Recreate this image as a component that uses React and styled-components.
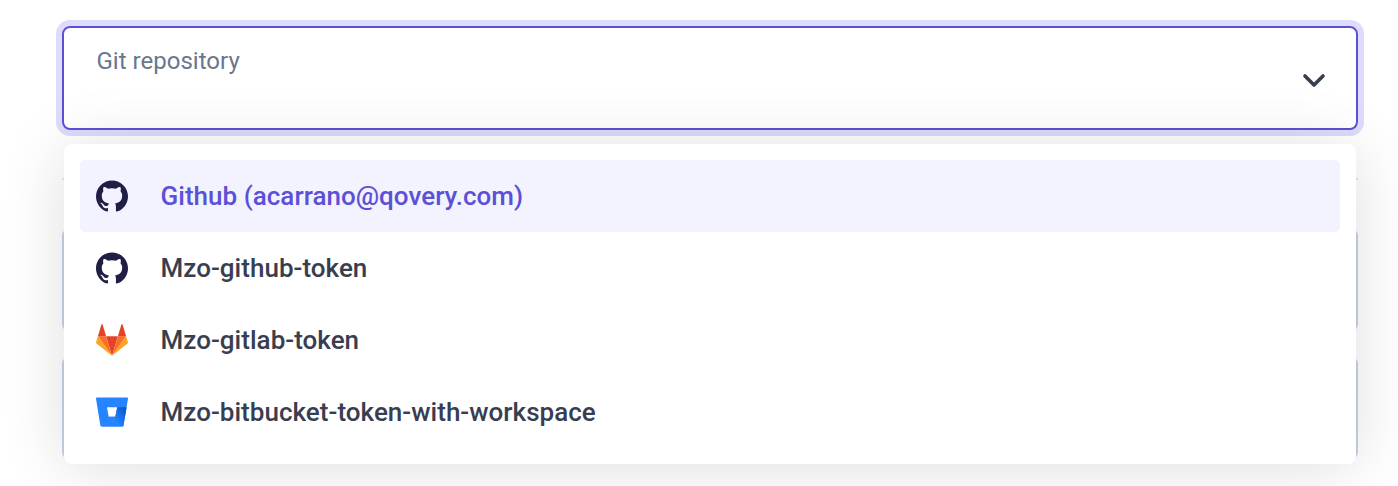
import React from "react";
import styled, { createGlobalStyle } from "styled-components";
import { SiGithub } from "react-icons/si";

const GlobalStyle = createGlobalStyle`
  * { box-sizing: border-box; }
  body {
    margin: 0;
    background: #fff;
    font-family: Roboto, "Liberation Sans", sans-serif;
    overflow: hidden;
  }
`;

const Page = styled.main`
  height: 486px;
  padding: 26px 40px 0 62px;
  overflow: hidden;
`;

const Form = styled.div`
  position: relative;
  display: flex;
  flex-direction: column;
`;

const Select = styled.div`
  display: flex;
  align-items: center;
  justify-content: space-between;
  height: 104px;
  padding: 0 30px 0 32.5px;
  border: 2px solid #5b50d6;
  border-radius: 8px;
  box-shadow: 0 0 0 6px #dedcfc;
`;

const Label = styled.span`
  align-self: flex-start;
  margin-top: 19px;
  font-size: 24px;
  line-height: 28px;
  letter-spacing: 0.02px;
  color: #67778e;
`;

const Chevron = styled.svg`
  display: block;
  width: 24px;
  height: 16px;
  margin-top: 4px;
`;

const Divider = styled.hr`
  width: 100%;
  height: 2px;
  margin: 48px 0;
  border: 0;
  background: #e1e8f5;
`;

const Field = styled.div`
  height: 104px;
  margin-bottom: 24px;
  border: 2px solid #c6d3e7;
  border-radius: 8px;
`;

const Menu = styled.ul`
  position: absolute;
  top: 118px;
  left: 2px;
  right: 2px;
  height: 320px;
  margin: 0;
  padding: 16px;
  list-style: none;
  background: #fff;
  border-radius: 8px;
  box-shadow: 0 4px 64px rgba(0, 0, 0, 0.135);
`;

const Option = styled.li`
  display: flex;
  align-items: center;
  gap: 32.5px;
  height: 72px;
  padding: 0 16px;
  border-radius: 5px;
  font-size: 26px;
  font-weight: 500;
  letter-spacing: 0.03px;
  color: ${(p) => (p.$active ? "#5b50d6" : "#383e50")};
  background: ${(p) => (p.$active ? "#f2f3fe" : "transparent")};
`;

const IconBox = styled.span`
  display: flex;
  width: 32px;
  height: 32px;
  color: #1f1f45;

  svg { width: 32px; height: 32px; }
`;

const GitlabLogo = () => (
  <svg viewBox="0 0 32 32">
    <path fill="#e24329" d="M16 31.8 10.1 12.3h11.8z" />
    <path fill="#fc6d26" d="M16 31.8 10.1 12.3H1.9zM16 31.8l5.9-19.5h8.2z" />
    <path fill="#fca326" d="M1.9 12.3.1 18.2c-.2.6 0 1.1.4 1.4L16 31.8zM30.1 12.3l1.8 5.9c.2.6 0 1.1-.4 1.4L16 31.8z" />
    <path fill="#e24329" d="M1.9 12.3h8.2L6.6.6c-.2-.6-1-.6-1.200 0zM30.1 12.3h-8.2L25.4.6c.2-.6 1-.6 1.200 0z" />
  </svg>
);

const BitbucketLogo = () => (
  <svg viewBox="0 0 32 32">
    <defs>
      <linearGradient id="bucket" x1="31" y1="12" x2="15" y2="24" gradientUnits="userSpaceOnUse">
        <stop offset="0" stopColor="#0052cc" />
        <stop offset=".85" stopColor="#2684ff" />
      </linearGradient>
    </defs>
    <path fill="#2684ff" d="M1 1.6a1 1 0 0 0-1 1.2l4.3 26.4c.1.7.7 1.2 1.4 1.2h20.8c.5 0 .9-.4 1-.9L32 2.8a1 1 0 0 0-1-1.2zm18.3 19.1h-6.6L11 11.3h10.2z" />
    <path fill="url(#bucket)" d="M30.6 11.3h-9.4l-1.9 9.4h-6.6L4.9 30c.2.2.5.4.8.4h20.8c.5 0 .9-.4 1-.9z" />
  </svg>
);

const options = [
  { name: "Github (acarrano@qovery.com)", Icon: SiGithub, active: true },
  { name: "Mzo-github-token", Icon: SiGithub },
  { name: "Mzo-gitlab-token", Icon: GitlabLogo },
  { name: "Mzo-bitbucket-token-with-workspace", Icon: BitbucketLogo },
];

export default function App() {
  return (
    <>
      <GlobalStyle />
      <Page>
        <Form>
          <Select>
            <Label>Git repository</Label>
            <Chevron viewBox="0 0 24 16" fill="none" stroke="#383e50" strokeWidth="3.6" strokeLinecap="round" strokeLinejoin="round">
              <path d="M3 4l9 9 9-9" />
            </Chevron>
          </Select>
          <Divider />
          <Field />
          <Field />
          <Menu>
            {options.map(({ name, Icon, active }) => (
              <Option key={name} $active={active}>
                <IconBox><Icon /></IconBox>
                {name}
              </Option>
            ))}
          </Menu>
        </Form>
      </Page>
    </>
  );
}
